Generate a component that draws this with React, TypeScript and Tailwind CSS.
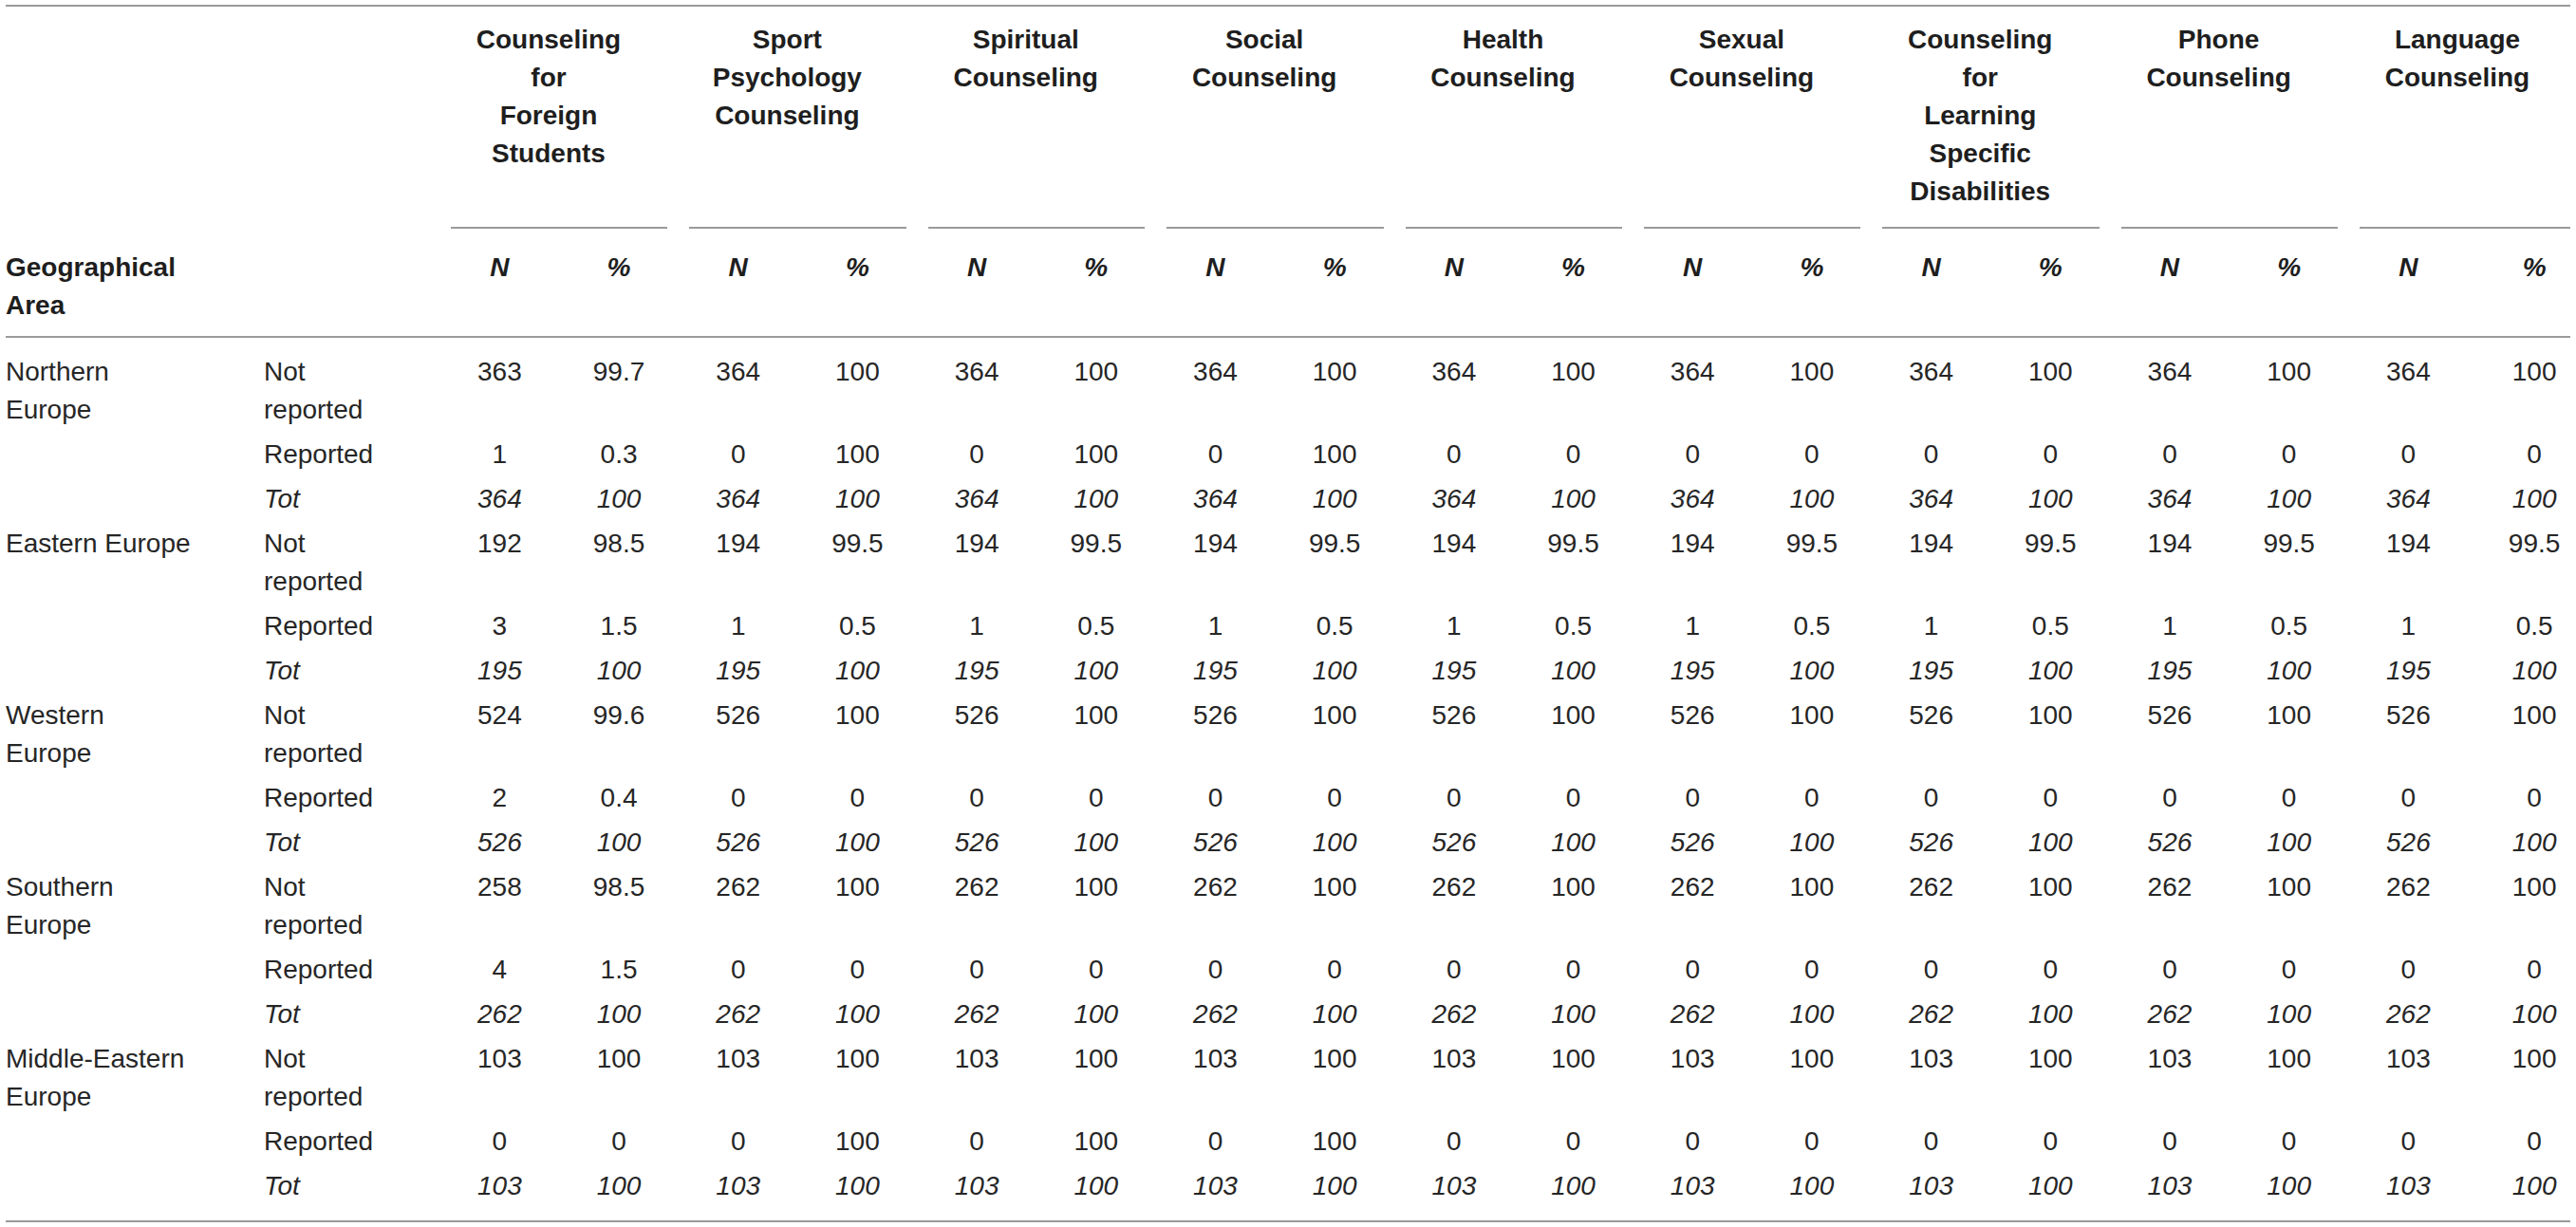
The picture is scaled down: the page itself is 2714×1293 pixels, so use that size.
import React from 'react';

const rep = (a: string, b: string, n: number) => Array.from({ length: n }).flatMap(() => [a, b]);

// header lines broken as in the source table
const groups = [
  ['Counseling', 'for', 'Foreign', 'Students'],
  ['Sport', 'Psychology', 'Counseling'],
  ['Spiritual', 'Counseling'],
  ['Social', 'Counseling'],
  ['Health', 'Counseling'],
  ['Sexual', 'Counseling'],
  ['Counseling', 'for', 'Learning', 'Specific', 'Disabilities'],
  ['Phone', 'Counseling'],
  ['Language', 'Counseling'],
];

const regions = [
  {
    name: 'Northern Europe',
    notReported: ['363', '99.7', ...rep('364', '100', 8)],
    reported: ['1', '0.3', ...rep('0', '100', 3), ...rep('0', '0', 5)],
    total: rep('364', '100', 9),
  },
  {
    name: 'Eastern Europe',
    notReported: ['192', '98.5', ...rep('194', '99.5', 8)],
    reported: ['3', '1.5', ...rep('1', '0.5', 8)],
    total: rep('195', '100', 9),
  },
  {
    name: 'Western Europe',
    notReported: ['524', '99.6', ...rep('526', '100', 8)],
    reported: ['2', '0.4', ...rep('0', '0', 8)],
    total: rep('526', '100', 9),
  },
  {
    name: 'Southern Europe',
    notReported: ['258', '98.5', ...rep('262', '100', 8)],
    reported: ['4', '1.5', ...rep('0', '0', 8)],
    total: rep('262', '100', 9),
  },
  {
    name: 'Middle-Eastern Europe',
    notReported: rep('103', '100', 9),
    reported: [...rep('0', '0', 1), ...rep('0', '100', 3), ...rep('0', '0', 5)],
    total: rep('103', '100', 9),
  },
];

type Pos = 'first' | 'mid' | 'last';

function DataRow({ region, label, values, italic, pos }: { region?: string; label: string; values: string[]; italic?: boolean; pos: Pos }) {
  const pad = pos === 'first' ? 'pt-4 pb-[3.5px]' : pos === 'last' ? 'pt-[3.5px] pb-4 border-b-2 border-[#9a9a9a]' : 'py-[3.5px]';
  const style = italic ? 'italic' : '';
  return (
    <tr>
      <td className={`${pad} align-top`}>
        {region && <div className="w-[198px]">{region}</div>}
      </td>
      <td className={`${pad} align-top ${style}`}>
        <div className="w-[130px]">{label}</div>
      </td>
      {values.map((v, i) => (
        <td key={i} className={`${pad} align-top text-center ${style} ${i === values.length - 1 ? 'pl-8' : ''}`}>
          {v}
        </td>
      ))}
    </tr>
  );
}

export default function App() {
  return (
    <div className="min-h-screen w-full bg-white pt-[5px] pl-[6px] font-['Liberation_Sans',Arial,sans-serif] text-[28px] leading-10 text-[#262626]">
      <table className="w-[2702px] table-fixed border-separate border-spacing-0 border-t-2 border-[#9a9a9a]">
        <colgroup>
          <col className="w-[272px]" />
          <col className="w-[185.5px]" />
          {Array.from({ length: 16 }).map((_, i) => (
            <col key={i} className="w-[125.7px]" />
          ))}
          <col className="w-[125.7px]" />
          <col />
        </colgroup>
        <thead className="text-[#1e1e1e]">
          <tr>
            <th />
            <th />
            {groups.map((g, i) => (
              <th
                key={g.join(' ')}
                colSpan={2}
                className={`pt-[15px] pl-[11.5px] align-top font-bold ${i === groups.length - 1 ? 'pr-0' : 'pr-[11.5px]'}`}
              >
                <div className="ml-[18px] flex h-[200px] w-[170px] flex-col items-center">
                  {g.map((line) => (
                    <span key={line}>{line}</span>
                  ))}
                </div>
                <div className="mt-[17px] h-[2px] bg-[#9a9a9a]" />
              </th>
            ))}
          </tr>
          <tr>
            <th className="pt-[21px] pb-[12px] border-b-2 border-[#9a9a9a] text-left align-top font-bold">
              <div className="w-[198px]">Geographical Area</div>
            </th>
            <th className="pt-[21px] pb-[12px] border-b-2 border-[#9a9a9a]" />
            {groups.flatMap((g, i) => [
              <th key={g.join(' ') + 'n'} className="pt-[21px] pb-[12px] border-b-2 border-[#9a9a9a] text-center align-top font-bold italic">
                N
              </th>,
              <th
                key={g.join(' ') + 'p'}
                className={`pt-[21px] pb-[12px] border-b-2 border-[#9a9a9a] text-center align-top font-bold italic ${i === groups.length - 1 ? 'pl-8' : ''}`}
              >
                %
              </th>,
            ])}
          </tr>
        </thead>
        <tbody>
          {regions.map((r, ri) => (
            <React.Fragment key={r.name}>
              <DataRow region={r.name} label="Not reported" values={r.notReported} pos={ri === 0 ? 'first' : 'mid'} />
              <DataRow label="Reported" values={r.reported} pos="mid" />
              <DataRow label="Tot" values={r.total} italic pos={ri === regions.length - 1 ? 'last' : 'mid'} />
            </React.Fragment>
          ))}
        </tbody>
      </table>
    </div>
  );
}
